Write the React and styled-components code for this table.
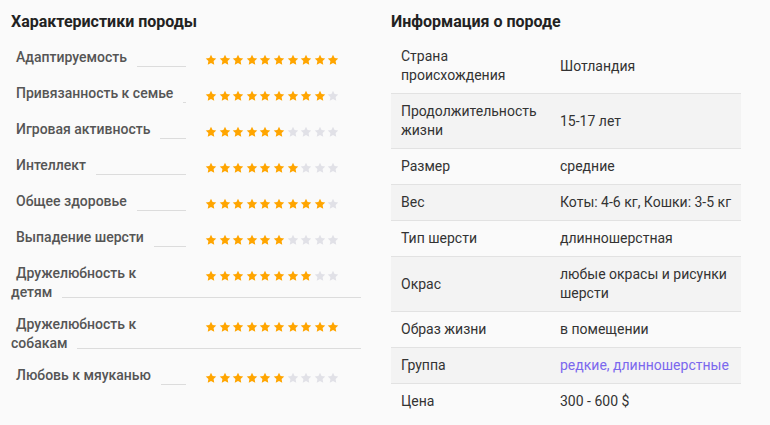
import React from "react";
import styled, { createGlobalStyle } from "styled-components";

const GlobalStyle = createGlobalStyle`
  *, *::before, *::after { box-sizing: border-box; }
  html, body { margin: 0; padding: 0; background: #fafafa; }
  body { font-family: Roboto, "Liberation Sans", Arial, sans-serif; }
`;

const Page = styled.div`
  display: flex;
  gap: 30px;
  padding: 12px 0 0 11px;
`;

const Column = styled.section`
  width: 350px;
  display: flex;
  flex-direction: column;
`;

const Title = styled.h2`
  margin: 0;
  font: 700 16px/19px Roboto, "Liberation Sans", sans-serif;
  color: #222;
`;

const Row = styled.div`
  display: flex;
  flex-direction: ${(p) => (p.$wrapped ? "column" : "row")};
  align-items: flex-start;
  padding-top: 17px;
`;

const Line = styled.div`
  display: flex;
  align-items: ${(p) => (p.$tail ? "flex-end" : "flex-start")};
  width: 100%;
  margin-bottom: ${(p) => (p.$tail ? "-4px" : "0")};
`;

const LabelCell = styled.div`
  flex: 0 0 175px;
  display: flex;
  align-items: flex-end;
`;

const LabelText = styled.span`
  font: 500 14px/19px Roboto, "Liberation Sans", sans-serif;
  color: #555;
  padding-left: ${(p) => (p.$noIndent ? "0" : "5px")};
  white-space: nowrap;
`;

const Leader = styled.span`
  flex: 1;
  margin-left: 10px;
  border-bottom: 1px solid #dcdcdc;
  margin-bottom: ${(p) => (p.$raised ? "4px" : "0")};
`;

const Stars = styled.div`
  display: flex;
  gap: 1.6px;
  margin-left: 19px;
  margin-top: 6px;
`;

const StarSvg = styled.svg`
  width: 12px;
  height: 12px;
  display: block;
  fill: ${(p) => (p.$on ? "#ffa500" : "#e1e1e7")};
`;

const Star = ({ on }) => (
  <StarSvg $on={on} viewBox="0 0 24 24">
    <path d="M12 1.5l3.2 6.6 7.3 1-5.3 5.1 1.3 7.2L12 18l-6.5 3.4 1.3-7.2L1.5 9.1l7.3-1z" />
  </StarSvg>
);

const Rating = ({ value }) => (
  <Stars>
    {Array.from({ length: 10 }, (_, i) => (
      <Star key={i} on={i < value} />
    ))}
  </Stars>
);

const Table = styled.table`
  margin-top: 8px;
  width: 350px;
  border-collapse: collapse;
  table-layout: fixed;
`;

const Tr = styled.tr`
  background: ${(p) => (p.$shaded ? "#f3f3f3" : "transparent")};
  &:not(:first-child) > td {
    border-top: 1px solid #e2e2e2;
  }
`;

const Td = styled.td`
  padding: ${(p) => (p.$label ? "8px 10px" : "8px 2px 8px 10px")};
  font: 400 14px/19px Roboto, "Liberation Sans", sans-serif;
  color: #333;
  vertical-align: middle;
  width: ${(p) => (p.$label ? "159px" : "auto")};
`;

const Link = styled.a`
  color: #7b68ee;
  text-decoration: none;
`;

const traits = [
  { label: "Адаптируемость", rating: 10 },
  { label: "Привязанность к семье", rating: 9 },
  { label: "Игровая активность", rating: 6 },
  { label: "Интеллект", rating: 7 },
  { label: "Общее здоровье", rating: 9 },
  { label: "Выпадение шерсти", rating: 6 },
  { label: "Дружелюбность к", tail: "детям", rating: 8 },
  { label: "Дружелюбность к", tail: "собакам", rating: 10 },
  { label: "Любовь к мяуканью", rating: 6 },
];

const info = [
  ["Страна происхождения", "Шотландия"],
  ["Продолжительность жизни", "15-17 лет"],
  ["Размер", "средние"],
  ["Вес", "Коты: 4-6 кг, Кошки: 3-5 кг"],
  ["Тип шерсти", "длинношерстная"],
  ["Окрас", "любые окрасы и рисунки шерсти"],
  ["Образ жизни", "в помещении"],
  ["Группа", <Link href="#">редкие, длинношерстные</Link>],
  ["Цена", "300 - 600 $"],
];

export default function App() {
  return (
    <>
      <GlobalStyle />
      <Page>
        <Column>
          <Title>Характеристики породы</Title>
          {traits.map((t, i) =>
            t.tail ? (
              <Row key={i} $wrapped>
                <Line>
                  <LabelCell>
                    <LabelText>{t.label}</LabelText>
                  </LabelCell>
                  <Rating value={t.rating} />
                </Line>
                <Line $tail>
                  <LabelText $noIndent>{t.tail}</LabelText>
                  <Leader $raised />
                </Line>
              </Row>
            ) : (
              <Row key={i}>
                <LabelCell>
                  <LabelText>{t.label}</LabelText>
                  <Leader />
                </LabelCell>
                <Rating value={t.rating} />
              </Row>
            )
          )}
        </Column>
        <Column>
          <Title>Информация о породе</Title>
          <Table>
            <tbody>
              {info.map(([k, v], i) => (
                <Tr key={i} $shaded={i % 2 === 1}>
                  <Td $label>{k}</Td>
                  <Td>{v}</Td>
                </Tr>
              ))}
            </tbody>
          </Table>
        </Column>
      </Page>
    </>
  );
}
